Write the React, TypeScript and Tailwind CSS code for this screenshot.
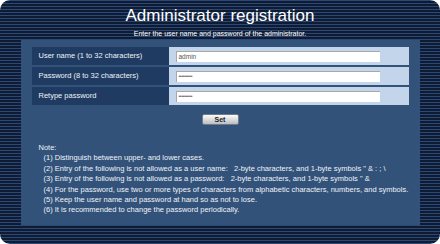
import React from 'react';

const rows = [
    { label: 'User name (1 to 32 characters)', value: 'admin', type: 'text' },
    { label: 'Password (8 to 32 characters)', value: '••••••••••', type: 'password' },
    { label: 'Retype password', value: '••••••••••', type: 'password' },
];

const notes = [
    '(1) Distinguish between upper- and lower cases.',
    '(2) Entry of the following is not allowed as a user name:\u00a0\u00a0\u00a02-byte characters, and 1-byte symbols " & : ; \\',
    '(3) Entry of the following is not allowed as a password:\u00a0\u00a0\u00a02-byte characters, and 1-byte symbols " &',
    '(4) For the password, use two or more types of characters from alphabetic characters, numbers, and symbols.',
    '(5) Keep the user name and password at hand so as not to lose.',
    '(6) It is recommended to change the password periodically.',
];

export default function App() {
    return (
        <div className="w-[440px] h-[244px] bg-white font-['Liberation_Sans',Arial,sans-serif]">
            <div className="w-full h-full rounded-[10px] overflow-hidden flex flex-col items-center bg-[repeating-linear-gradient(to_bottom,#2c4874_0px,#2c4874_1px,#0f1b32_1px,#0f1b32_3px)]">
                {/* Heading */}
                <h1 className="mt-[5px] text-[17px] leading-[21px] text-white">Administrator registration</h1>
                <p className="mt-[3px] text-[7px] leading-[9px] text-white">
                    Enter the user name and password of the administrator.
                </p>

                {/* Panel */}
                <div className="mt-[2px] w-[399px] h-[185px] bg-[#33527a] flex flex-col pl-[11px] pt-[7px]">
                    <div className="w-[377px] flex flex-col gap-[2px]">
                        {rows.map(r => (
                            <div key={r.label} className="flex h-[18px]">
                                <div className="w-[137px] bg-[#1f3b61] text-[7.5px] text-[#eef3f9] flex items-center pl-[7px]">
                                    {r.label}
                                </div>
                                <div className="flex-1 bg-[#c3d5eb] flex items-center pl-[7px]">
                                    <div className="w-[204px] h-[11px] bg-white border-t border-l border-[#a8a8a8] flex items-center pl-[2px] text-[6.5px] text-[#555]">
                                        {r.type === 'text' ? r.value : <span className="text-[5px] tracking-[-0.4px] text-[#666]">{r.value}</span>}
                                    </div>
                                </div>
                            </div>
                        ))}
                    </div>

                    <div className="w-[377px] flex justify-center mt-[9px]">
                        <button className="w-[37px] h-[11px] rounded-[2px] border border-[#6f7b88] bg-gradient-to-b from-[#fbfbfb] via-[#dcdcdc] to-[#b9bec4] text-[7px] font-bold leading-none text-[#222] flex items-center justify-center">
                            Set
                        </button>
                    </div>

                    <div className="mt-[18px] pl-[7px] text-[7.5px] leading-[10.4px] text-[#eef3f9]">
                        <div>Note:</div>
                        {notes.map(n => (
                            <div key={n} className="pl-[5px] whitespace-nowrap">{n}</div>
                        ))}
                    </div>
                </div>
            </div>
        </div>
    );
}
